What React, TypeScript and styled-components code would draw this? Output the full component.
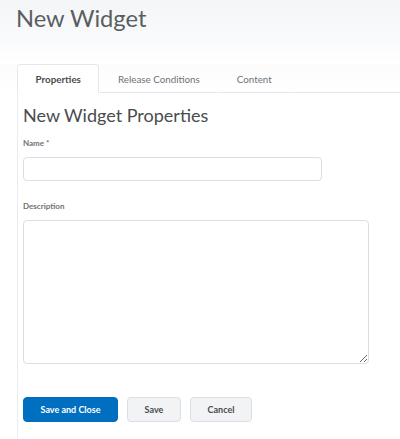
import React, { useState } from "react";
import styled, { createGlobalStyle } from "styled-components";

const GlobalStyle = createGlobalStyle`
  html, body {
    margin: 0;
    padding: 0;
    background: #ffffff;
    font-family: Lato, "Noto Sans", sans-serif;
    color: #494c4e;
  }
  * {
    box-sizing: border-box;
  }
`;

interface TabProps {
  active?: boolean;
}

type ButtonKind = "primary" | "normal";

const tabs = ["Properties", "Release Conditions", "Content"];

const App: React.FC = () => {
  const [current, setCurrent] = useState<number>(0);
  const [name, setName] = useState<string>("");
  const [description, setDescription] = useState<string>("");

  return (
    <>
      <GlobalStyle />
      <PageBlock>
        <Header>
          <h1>New Widget</h1>
        </Header>
        <TabBar>
          {tabs.map((label, i) => (
            <Tab key={label} active={i === current} onClick={() => setCurrent(i)}>
              {label}
            </Tab>
          ))}
          <TabFill />
        </TabBar>
        <Panel>
          <h2>New Widget Properties</h2>
          <Field>
            <Label>Name *</Label>
            <TextInput
              value={name}
              onChange={(e: React.ChangeEvent<HTMLInputElement>) =>
                setName(e.target.value)
              }
            />
          </Field>
          <Field>
            <Label>Description</Label>
            <TextArea
              value={description}
              onChange={(e: React.ChangeEvent<HTMLTextAreaElement>) =>
                setDescription(e.target.value)
              }
            />
          </Field>
          <ButtonRow>
            <Button kind="primary" wide={95}>
              Save and Close
            </Button>
            <Button kind="normal" wide={54}>
              Save
            </Button>
            <Button kind="normal" wide={62}>
              Cancel
            </Button>
          </ButtonRow>
        </Panel>
      </PageBlock>
    </>
  );
};

const PageBlock = styled.div`
  display: flex;
  flex-direction: column;
  width: 400px;
  height: 439px;
  overflow: hidden;
`;

const Header = styled.div`
  height: 64px;
  padding: 3px 0 0 16px;
  background: linear-gradient(to bottom, #f4f5f7 0%, #f9fafb 60%, #ffffff 100%);
  & > h1 {
    margin: 0;
    font-size: 23.7px;
    font-weight: 400;
    line-height: 30px;
    color: #5a5e61;
  }
`;

const TabBar = styled.div`
  display: flex;
  align-items: stretch;
  height: 29px;
  padding-left: 17px;
  background: linear-gradient(to bottom, #fcfcfd 0%, #ffffff 100%);
`;

const Tab = styled.div<TabProps>`
  display: flex;
  align-items: center;
  padding: 0 17.5px;
  font-size: 9.8px;
  font-weight: ${(p) => (p.active ? 700 : 400)};
  color: ${(p) => (p.active ? "#494c4e" : "#6e7376")};
  cursor: pointer;
  border: 1px solid ${(p) => (p.active ? "#e3e8ef" : "transparent")};
  border-bottom: 1px solid ${(p) => (p.active ? "#ffffff" : "#e3e6ee")};
  border-radius: 4px 4px 0 0;
  background: ${(p) => (p.active ? "#ffffff" : "transparent")};
`;

const TabFill = styled.div`
  flex: 1;
  border-bottom: 1px solid #e3e6ee;
`;

const Panel = styled.div`
  flex: 1;
  margin-left: 17px;
  padding: 10px 0 0 5px;
  border-left: 1px solid #e9edf2;
  & > h2 {
    margin: 0 0 10px;
    font-size: 18px;
    font-weight: 400;
    line-height: 24px;
    color: #494c4e;
  }
`;

const Field = styled.div`
  display: flex;
  flex-direction: column;
  margin-bottom: 19px;
`;

const Label = styled.label`
  font-size: 8px;
  font-weight: 700;
  line-height: 12px;
  color: #6e7376;
  margin-bottom: 8px;
`;

const TextInput = styled.input`
  width: 299px;
  height: 24px;
  border: 1px solid #dadee6;
  border-radius: 4px;
  padding: 0 6px;
  font-family: inherit;
  font-size: 11px;
  outline: none;
`;

const TextArea = styled.textarea`
  width: 346px;
  height: 144px;
  border: 1px solid #dadee6;
  border-radius: 4px;
  padding: 6px;
  font-family: inherit;
  font-size: 11px;
  outline: none;
  resize: both;
  display: block;
`;

const ButtonRow = styled.div`
  display: flex;
  gap: 9px;
  margin-top: 33px;
`;

const Button = styled.button<{ kind: ButtonKind; wide: number }>`
  width: ${(p) => p.wide}px;
  height: 25px;
  border-radius: 4px;
  font-family: inherit;
  font-size: 9px;
  font-weight: 700;
  cursor: pointer;
  border: 1px solid ${(p) => (p.kind === "primary" ? "#006fbf" : "#dadee6")};
  background: ${(p) => (p.kind === "primary" ? "#006fbf" : "#f1f3f5")};
  color: ${(p) => (p.kind === "primary" ? "#ffffff" : "#494c4e")};
`;

export default App;
